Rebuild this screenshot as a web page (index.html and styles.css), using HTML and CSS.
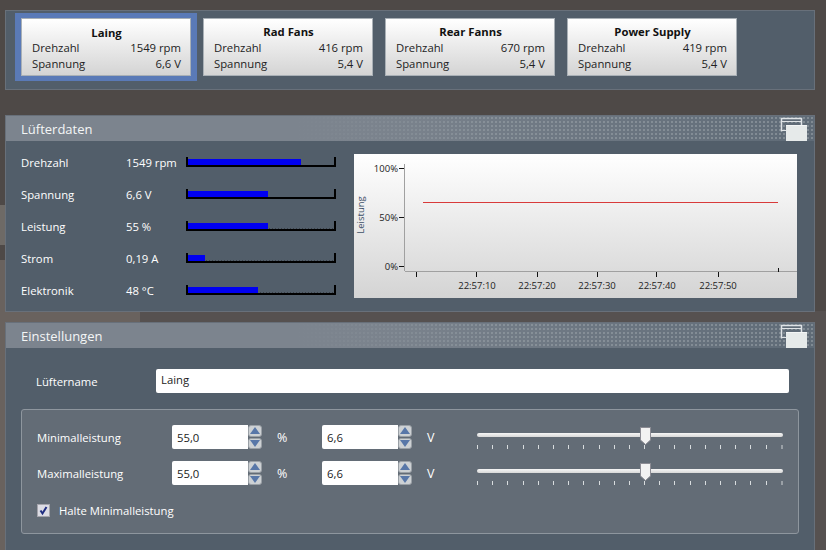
FILE: index.html
```html
<!DOCTYPE html>
<html lang="de">
<head>
<meta charset="utf-8">
<title>Lüfter</title>
<link rel="stylesheet" href="styles.css">
</head>
<body>
<section class="panel tiles">
  <div class="tile-slot selected"><div class="tile"><div class="tile-name">Laing</div><div class="tile-row"><span>Drehzahl</span><span>1549 rpm</span></div><div class="tile-row"><span>Spannung</span><span>6,6 V</span></div></div></div>
  <div class="tile-slot"><div class="tile"><div class="tile-name">Rad Fans</div><div class="tile-row"><span>Drehzahl</span><span>416 rpm</span></div><div class="tile-row"><span>Spannung</span><span>5,4 V</span></div></div></div>
  <div class="tile-slot"><div class="tile"><div class="tile-name">Rear Fanns</div><div class="tile-row"><span>Drehzahl</span><span>670 rpm</span></div><div class="tile-row"><span>Spannung</span><span>5,4 V</span></div></div></div>
  <div class="tile-slot"><div class="tile"><div class="tile-name">Power Supply</div><div class="tile-row"><span>Drehzahl</span><span>419 rpm</span></div><div class="tile-row"><span>Spannung</span><span>5,4 V</span></div></div></div>
</section>

<section class="panel data">
  <header class="panel-head"><span>Lüfterdaten</span>
    <svg class="win-icon" width="27" height="24" viewBox="0 0 27 24"><path d="M1.500 14.500V1.500H21.500V9" fill="none" stroke="#dfe3e6" stroke-width="1.500"/><path d="M2 4.500H21M2 13.500H6" stroke="#dfe3e6" fill="none"/><rect x="6" y="8" width="21" height="16" fill="#e6eaea"/><path d="M6 8.500H27" stroke="#f4f6f6" fill="none"/></svg>
  </header>
  <div class="data-body">
    <div class="stats">
      <div class="stat"><span class="stat-name">Drehzahl</span><span class="stat-val">1549 rpm</span><div class="meter"><div class="fill" style="width:113px"></div></div></div>
      <div class="stat"><span class="stat-name">Spannung</span><span class="stat-val">6,6 V</span><div class="meter"><div class="fill" style="width:80px"></div></div></div>
      <div class="stat"><span class="stat-name">Leistung</span><span class="stat-val">55 %</span><div class="meter dotted"><div class="fill" style="width:80px"></div></div></div>
      <div class="stat"><span class="stat-name">Strom</span><span class="stat-val">0,19 A</span><div class="meter dotted"><div class="fill" style="width:17px"></div></div></div>
      <div class="stat"><span class="stat-name">Elektronik</span><span class="stat-val">48 °C</span><div class="meter dotted"><div class="fill" style="width:70px"></div></div></div>
    </div>
    <svg class="chart" width="443" height="144" viewBox="0 0 443 144">
      <defs><linearGradient id="cg" x1="0" y1="0" x2="0" y2="1"><stop offset="0" stop-color="#fff"/><stop offset="1" stop-color="#d4d4d4"/></linearGradient></defs>
      <rect width="443" height="144" fill="url(#cg)"/>
      <path d="M50.500 10V117M51 117.500H443" stroke="#a0a0a0" fill="none"/>
      <path d="M45 14.500h5M45 63.500h5M45 112.500h5" stroke="#111" fill="none"/>
      <path d="M62.500 118v5M122.500 118v5M183.500 118v5M243.500 118v5M302.500 118v5M364.500 118v5M424.500 118v-4" stroke="#111" fill="none"/>
      <path d="M69 48.500H424" stroke="#d83a3a" fill="none"/>
      <g class="chart-text">
        <text x="44" y="18" text-anchor="end">100%</text>
        <text x="44" y="67" text-anchor="end">50%</text>
        <text x="44" y="116" text-anchor="end">0%</text>
        <text x="123" y="135" text-anchor="middle">22:57:10</text>
        <text x="183" y="135" text-anchor="middle">22:57:20</text>
        <text x="243" y="135" text-anchor="middle">22:57:30</text>
        <text x="303" y="135" text-anchor="middle">22:57:40</text>
        <text x="364" y="135" text-anchor="middle">22:57:50</text>
        <text class="axis-title" transform="translate(10,61) rotate(-90)" text-anchor="middle">Leistung</text>
      </g>
    </svg>
  </div>
</section>

<section class="panel settings">
  <header class="panel-head"><span>Einstellungen</span>
    <svg class="win-icon" width="27" height="24" viewBox="0 0 27 24"><path d="M1.500 14.500V1.500H21.500V9" fill="none" stroke="#dfe3e6" stroke-width="1.500"/><path d="M2 4.500H21M2 13.500H6" stroke="#dfe3e6" fill="none"/><rect x="6" y="8" width="21" height="16" fill="#e6eaea"/><path d="M6 8.500H27" stroke="#f4f6f6" fill="none"/></svg>
  </header>
  <div class="settings-body">
    <div class="name-row"><label class="name-label">Lüftername</label><div class="textbox">Laing</div></div>
    <div class="group">
      <div class="limit-row">
        <span class="limit-name">Minimalleistung</span>
        <div class="spin"><div class="spin-box">55,0</div><div class="spin-btns"><div class="spin-btn"><i class="up"></i></div><div class="spin-btn"><i class="down"></i></div></div></div>
        <span class="unit">%</span>
        <div class="spin"><div class="spin-box">6,6</div><div class="spin-btns"><div class="spin-btn"><i class="up"></i></div><div class="spin-btn"><i class="down"></i></div></div></div>
        <span class="unit">V</span>
        <div class="slider"><div class="track"></div><svg class="thumb" width="11" height="18" viewBox="0 0 11 18"><path d="M.5.5h10v12.500l-5 4.500-5-4.500z" fill="#f2f2f2" stroke="#8c8c94"/></svg><div class="ticks"><i></i><i></i><i></i><i></i><i></i><i></i><i></i><i></i><i></i><i></i><i></i><i></i><i></i><i></i><i></i><i></i><i></i><i></i><i></i><i></i><i class="end"></i></div></div>
      </div>
      <div class="limit-row">
        <span class="limit-name">Maximalleistung</span>
        <div class="spin"><div class="spin-box">55,0</div><div class="spin-btns"><div class="spin-btn"><i class="up"></i></div><div class="spin-btn"><i class="down"></i></div></div></div>
        <span class="unit">%</span>
        <div class="spin"><div class="spin-box">6,6</div><div class="spin-btns"><div class="spin-btn"><i class="up"></i></div><div class="spin-btn"><i class="down"></i></div></div></div>
        <span class="unit">V</span>
        <div class="slider"><div class="track"></div><svg class="thumb" width="11" height="18" viewBox="0 0 11 18"><path d="M.5.5h10v12.500l-5 4.500-5-4.500z" fill="#f2f2f2" stroke="#8c8c94"/></svg><div class="ticks"><i></i><i></i><i></i><i></i><i></i><i></i><i></i><i></i><i></i><i></i><i></i><i></i><i></i><i></i><i></i><i></i><i></i><i></i><i></i><i></i><i class="end"></i></div></div>
      </div>
      <div class="check-row">
        <svg class="check" width="13" height="13" viewBox="0 0 13 13"><rect x=".5" y=".5" width="12" height="12" fill="#dcdce4" stroke="#a4a4ac"/><path d="M3.500 6.500l2 3L9.500 3" fill="none" stroke="#1f2d80" stroke-width="2"/></svg>
        <span>Halte Minimalleistung</span>
      </div>
    </div>
  </div>
</section>
</body>
</html>
```
FILE: styles.css
```css
* { box-sizing: border-box; }
html, body { margin: 0; height: 550px; overflow: hidden; }
body {
  padding: 10px 11px 0 5px;
  background:
    linear-gradient(90deg, #69625e 140px, #565150 140px) 0 311px / 100% 239px no-repeat,
    linear-gradient(#6e6a66, #6e6a66) 0 205px / 5px 40px no-repeat,
    linear-gradient(#69625e, #69625e) 0 260px / 5px 51px no-repeat,
    #4e4947;
  font-family: "Open Sans", "Noto Sans", sans-serif;
  font-size: 11.3px;
  color: #fff;
}
.panel { background: #525e6a; border: 1px solid #68707a; width: 810px; }

.tiles { height: 80px; padding: 2px 9px; display: flex; margin-bottom: 25px; }
.tile-slot { width: 182px; height: 68px; padding: 5px 6px; }
.tile-slot.selected { background: #5a7ab7; }
.tile {
  height: 58px; padding: 5px 9px 0 10px;
  background: linear-gradient(#fff, #d4d4d4);
  border: 1px solid #a9b0b6;
  color: #222;
  line-height: 16px;
}
.tile-name { height: 16px; text-align: center; font-weight: 700; color: #111; }
.selected .tile-name { padding-top: 1px; }
.tile-row { display: flex; justify-content: space-between; }

.panel-head {
  height: 25px; padding: 1px 0 0 15px; position: relative;
  font-size: 13px; line-height: 25px; color: #f4f6f6;
  background-color: #7c848e;
  background-image:
    radial-gradient(circle, #939ca3 0.6px, transparent 0.9px),
    linear-gradient(90deg, #7c848e 40%, #5f6b77);
  background-size: 4px 4px, 100% 100%;
}
.panel-head::before {
  content: ""; position: absolute; inset: 0 40% 0 0;
  background: linear-gradient(90deg, #7c848e 60%, transparent);
}
.panel-head span { position: relative; }
.win-icon { position: absolute; right: 7px; top: 1px; }

.data { height: 197px; margin-bottom: 10px; }
.data-body { display: flex; align-items: flex-start; padding: 5px 0 0 15px; }
.stats { width: 333px; }
.stat { display: flex; align-items: center; height: 32px; }
.stat-name { width: 105px; }
.stat-val { width: 60px; }
.meter {
  width: 150px; height: 10px; position: relative;
  border: solid #000; border-width: 0 2px 2px;
}
.meter.dotted {
  background: repeating-linear-gradient(90deg, #3a4048 0 1px, transparent 1px 3px) 0 100% / 100% 1px no-repeat;
}
.fill { height: 6px; margin-top: 2px; background: #0000f0; }
.chart { display: block; margin-top: 8px; }
.chart-text text { font-size: 9.5px; fill: #222; font-family: "Open Sans", "Noto Sans", sans-serif; }
.chart-text .axis-title { fill: #3d5068; }

.settings { height: 240px; }
.settings-body { padding: 21px 15px 0; }
.name-row { display: flex; align-items: center; height: 24px; }
.name-label { width: 135px; padding-left: 15px; }
.textbox { width: 633px; height: 24px; line-height: 22px; padding-left: 5px; background: #fff; border-radius: 2px; color: #222; }
.group {
  width: 778px; height: 125px; margin-top: 16px; padding: 15px 15px 0;
  background: #636c76; border: 1px solid #8e969e; border-radius: 3px;
}
.limit-row { display: flex; align-items: center; height: 24px; margin-bottom: 12px; }
.limit-name { width: 135px; }
.spin { display: flex; width: 90px; height: 24px; }
.spin-box { width: 76px; padding-left: 5px; line-height: 25px; background: #fff; border-radius: 2px 0 0 2px; color: #222; }
.spin-btns { width: 14px; display: flex; flex-direction: column; gap: 1px; }
.spin-btn {
  flex: 1; display: flex; align-items: center; justify-content: center;
  background: #cdd1d4; border: 1px solid #9aa0a6; border-radius: 3px;
}
.spin-btn i { width: 0; height: 0; border-left: 5px solid transparent; border-right: 5px solid transparent; }
.spin-btn .up { border-bottom: 7px solid #5877a8; }
.spin-btn .down { border-top: 7px solid #5877a8; }
.unit { flex: none; width: 60px; padding-left: 15px; font-size: 12.500px; }
.slider { width: 306px; height: 24px; position: relative; margin-left: 5px; }
.track { height: 4px; margin-top: 8px; background: linear-gradient(#f6f6f6, #d8d8d8); border-radius: 2px; }
.thumb { position: absolute; left: 163px; top: 2px; }
.ticks { display: flex; justify-content: space-between; margin-top: 8px; }
.ticks i { width: 1px; height: 4px; background: #d8dcde; }
.ticks .end { width: 2px; background: #9aa0a6; }
.check-row { display: flex; align-items: center; gap: 9px; margin-top: 17px; height: 16px; }
```
